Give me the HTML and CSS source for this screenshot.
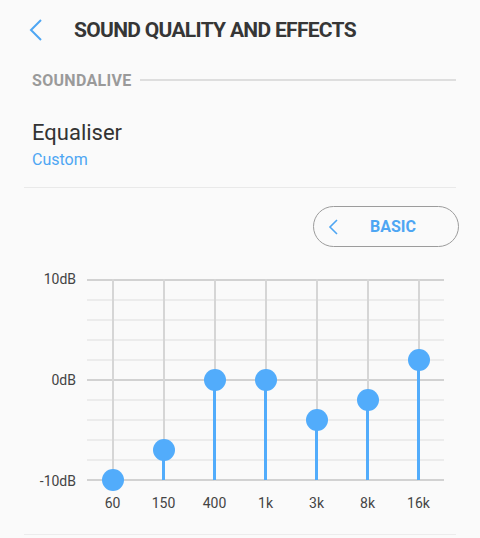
FILE: index.html
```html
<!DOCTYPE html>
<html lang="en">
<head>
  <meta charset="UTF-8" />
  <meta name="viewport" content="width=device-width, initial-scale=1.0"/>
  <title>Sound quality and effects</title>
  <link rel="stylesheet" href="styles.css">
</head>
<body>

<header class="topbar">
  <svg class="back" width="14" height="22" viewBox="0 0 14 22">
    <path d="M12 1 L2 11 L12 21" fill="none" stroke="#4ea6f3" stroke-width="2"/>
  </svg>
  <h1>SOUND QUALITY AND EFFECTS</h1>
</header>

<div class="subheader">
  <span>SOUNDALIVE</span>
  <div class="rule"></div>
</div>

<div class="item">
  <div class="item-title">Equaliser</div>
  <div class="item-sub">Custom</div>
</div>

<div class="preset">
  <button class="basic">
    <svg width="12" height="16" viewBox="0 0 12 16">
      <path d="M10 1 L3 8 L10 15" fill="none" stroke="#4ea6f3" stroke-width="1.6"/>
    </svg>
    <span>BASIC</span>
  </button>
</div>

<section class="eq">
  <div class="axis">
    <span>10dB</span>
    <span>0dB</span>
    <span>-10dB</span>
  </div>
  <div class="plot">
    <div class="band"><div class="stem" style="height: 0px"></div></div>
    <div class="band"><div class="stem" style="height: 30px"></div></div>
    <div class="band"><div class="stem" style="height: 100px"></div></div>
    <div class="band"><div class="stem" style="height: 100px"></div></div>
    <div class="band"><div class="stem" style="height: 60px"></div></div>
    <div class="band"><div class="stem" style="height: 80px"></div></div>
    <div class="band"><div class="stem" style="height: 120px"></div></div>
  </div>
</section>

<div class="freqs">
  <span>60</span>
  <span>150</span>
  <span>400</span>
  <span>1k</span>
  <span>3k</span>
  <span>8k</span>
  <span>16k</span>
</div>

<div class="divider"></div>

</body>
</html>
```

FILE: styles.css
```css
body {
  font-family: Roboto, "Noto Sans", sans-serif;
  margin: 0;
  padding: 0;
  background: #fafafa;
  color: #333;
}
.topbar {
  height: 60px;
  display: flex;
  align-items: center;
  padding-left: 29px;
}
.back {
  margin-right: 31px;
}
.topbar h1 {
  margin: 0;
  font-size: 21px;
  font-weight: 700;
  letter-spacing: -0.7px;
  color: #363636;
}
.subheader {
  height: 40px;
  display: flex;
  align-items: center;
  gap: 8px;
  padding: 0 24px 0 32px;
}
.subheader span {
  font-size: 16px;
  font-weight: 700;
  letter-spacing: 0.3px;
  color: #9a9a9a;
}
.subheader .rule {
  flex: 1;
  height: 2px;
  background: #dedede;
}
.item {
  margin: 0 24px;
  padding: 18px 8px 15px;
  border-bottom: 1px solid #e9e9e9;
}
.item-title {
  font-size: 22px;
  line-height: 30px;
  color: #333;
}
.item-sub {
  font-size: 16px;
  line-height: 24px;
  color: #4ea6f3;
}
.preset {
  display: flex;
  justify-content: flex-end;
  padding: 18px 21px 0;
}
.basic {
  width: 146px;
  height: 41px;
  border: 1.5px solid #9c9c9c;
  border-radius: 21px;
  background: transparent;
  display: flex;
  align-items: center;
  padding: 0 0 0 13px;
  font-family: inherit;
}
.basic span {
  margin-left: 31px;
  font-size: 16px;
  font-weight: 700;
  color: #4ea6f3;
}
.eq {
  display: flex;
  margin-top: 32px;
}
.axis {
  width: 76px;
  height: 222px;
  margin: -10px 0;
  display: flex;
  flex-direction: column;
  justify-content: space-between;
  align-items: flex-end;
  font-size: 14px;
  line-height: 20px;
  color: #444;
}
.plot {
  position: relative;
  margin-left: 11px;
  width: 357px;
  height: 202px;
  display: flex;
  background:
    repeating-linear-gradient(to bottom, #d2d2d2 0 2px, transparent 2px 100px),
    repeating-linear-gradient(to bottom, #ececec 0 2px, transparent 2px 20px);
}
.band {
  flex: 1;
  position: relative;
}
.band::before {
  content: "";
  position: absolute;
  top: 0;
  bottom: 0;
  left: 50%;
  width: 2px;
  margin-left: -1px;
  background: #d6d6d6;
}
.stem {
  position: absolute;
  bottom: 1px;
  left: 50%;
  width: 3px;
  margin-left: -1.5px;
  background: #52acfb;
}
.stem::before {
  content: "";
  position: absolute;
  top: -11px;
  left: 50%;
  width: 22px;
  height: 22px;
  margin-left: -11px;
  border-radius: 50%;
  background: #52acfb;
}
.freqs {
  display: flex;
  margin: 12px 0 0 87px;
  width: 357px;
}
.freqs span {
  flex: 1;
  text-align: center;
  font-size: 14px;
  line-height: 20px;
  color: #444;
}
.divider {
  margin: 21px 24px 0;
  height: 1px;
  background: #ececec;
}
```
